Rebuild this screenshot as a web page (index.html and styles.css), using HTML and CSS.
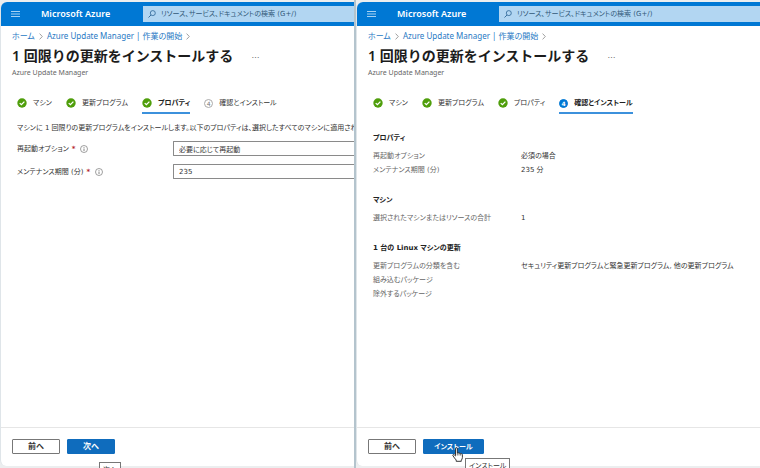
FILE: index.html
```html
<!DOCTYPE html>
<html lang="ja">
<head>
<meta charset="utf-8">
<title>1 回限りの更新をインストールする - Microsoft Azure</title>
<link rel="stylesheet" href="styles.css">
</head>
<body>
<svg class="sprite" aria-hidden="true">
  <symbol id="check" viewBox="0 0 10 10"><circle cx="5" cy="5" r="4.7" fill="#4f9e0b"/><path d="M2.7 5.1 4.4 6.7 7.4 3.6" fill="none" stroke="#fff" stroke-width="1.3"/></symbol>
  <symbol id="info" viewBox="0 0 8 8"><circle cx="4" cy="4" r="3.5" fill="none" stroke="#777" stroke-width=".7"/><path d="M4 3.5V6M4 2v.8" stroke="#666" stroke-width=".8"/></symbol>
  <symbol id="menu" viewBox="0 0 9 8"><path d="M0 1.5h9M0 4h9M0 6.5h9" stroke="#b9dcf6" stroke-width=".9"/></symbol>
  <symbol id="search" viewBox="0 0 8 8"><circle cx="4.8" cy="3.1" r="2.5" fill="none" stroke="#2c6596" stroke-width=".8"/><path d="M3 5 .5 7.5" stroke="#2c6596" stroke-width=".9"/></symbol>
  <symbol id="chevron" viewBox="0 0 4 7"><path d="M.6.6 3.3 3.5.6 6.4" fill="none" stroke="#888" stroke-width=".8"/></symbol>
</svg>
<div class="windows">
  <section class="window">
    <header class="topbar">
      <button class="menu" aria-label="メニュー"><svg><use href="#menu"/></svg></button>
      <span class="brand">Microsoft Azure</span>
      <label class="search"><svg><use href="#search"/></svg><input type="search" aria-label="検索" placeholder="リソース、サービス、ドキュメントの検索 (G+/)"></label>
    </header>
    <nav class="crumbs"><a href="#">ホーム</a><svg><use href="#chevron"/></svg><a href="#">Azure Update Manager | 作業の開始</a><svg><use href="#chevron"/></svg></nav>
    <div class="title"><h1>1 回限りの更新をインストールする</h1><button class="more" aria-label="その他">…</button></div>
    <p class="subtitle">Azure Update Manager</p>
    <nav class="tabs">
      <a href="#"><svg><use href="#check"/></svg>マシン</a>
      <a href="#"><svg><use href="#check"/></svg>更新プログラム</a>
      <a href="#" class="active"><svg><use href="#check"/></svg>プロパティ</a>
      <a href="#"><span class="step">4</span>確認とインストール</a>
    </nav>
    <form class="content form">
      <p class="lead">マシンに 1 回限りの更新プログラムをインストールします。以下のプロパティは、選択したすべてのマシンに適用され</p>
      <div class="field"><label for="reboot">再起動オプション <b>*</b><svg><use href="#info"/></svg></label><input id="reboot" type="text" value="必要に応じて再起動"></div>
      <div class="field"><label for="minutes">メンテナンス期間 (分) <b>*</b><svg><use href="#info"/></svg></label><input id="minutes" type="text" value="235"></div>
    </form>
    <footer class="actions">
      <button class="btn">前へ</button>
      <div class="hinted"><button class="btn primary">次へ</button><span class="tip low">次へ</span></div>
    </footer>
  </section>
  <section class="window">
    <header class="topbar">
      <button class="menu" aria-label="メニュー"><svg><use href="#menu"/></svg></button>
      <span class="brand">Microsoft Azure</span>
      <label class="search"><svg><use href="#search"/></svg><input type="search" aria-label="検索" placeholder="リソース、サービス、ドキュメントの検索 (G+/)"></label>
    </header>
    <nav class="crumbs"><a href="#">ホーム</a><svg><use href="#chevron"/></svg><a href="#">Azure Update Manager | 作業の開始</a><svg><use href="#chevron"/></svg></nav>
    <div class="title"><h1>1 回限りの更新をインストールする</h1><button class="more" aria-label="その他">…</button></div>
    <p class="subtitle">Azure Update Manager</p>
    <nav class="tabs">
      <a href="#"><svg><use href="#check"/></svg>マシン</a>
      <a href="#"><svg><use href="#check"/></svg>更新プログラム</a>
      <a href="#"><svg><use href="#check"/></svg>プロパティ</a>
      <a href="#" class="active"><span class="step current">4</span>確認とインストール</a>
    </nav>
    <div class="content review">
      <h2>プロパティ</h2>
      <dl><dt>再起動オプション</dt><dd>必須の場合</dd><dt>メンテナンス期間 (分)</dt><dd>235 分</dd></dl>
      <h2>マシン</h2>
      <dl><dt>選択されたマシンまたはリソースの合計</dt><dd>1</dd></dl>
      <h2>1 台の Linux マシンの更新</h2>
      <dl><dt>更新プログラムの分類を含む</dt><dd>セキュリティ更新プログラムと緊急更新プログラム, 他の更新プログラム</dd><dt>組み込むパッケージ</dt><dd></dd><dt>除外するパッケージ</dt><dd></dd></dl>
    </div>
    <footer class="actions">
      <button class="btn">前へ</button>
      <div class="hinted"><button class="btn primary wide">インストール</button><span class="tip">インストール</span>
        <svg class="pointer" viewBox="0 0 12 15"><path d="M3.5 8.5V1.8Q3.5.7 4.4.7T5.3 1.8V6Q6.2 5.2 7 6.3 8 5.7 8.7 6.8 9.8 6.2 10.4 7.5V10.5Q10.2 12.3 9.3 13.2V14.3H4.2V13Q2.5 11.2 1 8.8.4 7.7 1.3 7.5 2 7.3 3.5 9Z" fill="#fff" stroke="#222" stroke-width=".9"/><path d="M5.3 6v2.5M7 6.3v2.2M8.7 6.8v1.8" stroke="#222" stroke-width=".6"/></svg>
      </div>
    </footer>
  </section>
</div>
</body>
</html>
```
FILE: styles.css
```css
* { box-sizing: border-box; }

body {
  margin: 0;
  background: #eceeef;
  color: #333;
  font: 7px/14px "DejaVu Sans", "Noto Sans CJK JP", sans-serif;
  font-feature-settings: "palt";
}

h1, h2, p, dl, dd { margin: 0; }
a { color: inherit; text-decoration: none; }
button, input { font: inherit; font-feature-settings: inherit; color: inherit; }
svg { flex: none; }
.sprite { position: absolute; width: 0; height: 0; }

.windows {
  display: grid;
  grid-template-columns: 354fr 404fr;
  gap: 2px;
  height: 100vh;
  overflow: hidden;
  padding: 2px 0;
  background: linear-gradient(#b4c4cd, #b4c4cd) 46.7% 0 / 2px 100% no-repeat;
}

.window {
  display: flex;
  flex-direction: column;
  min-width: 0;
  background: #fff;
  border-left: 1px solid #dfe5e9;
  border-radius: 6px 0 0 6px;
  white-space: nowrap;
}

.topbar {
  display: flex;
  align-items: center;
  height: 24px;
  padding-left: 10px;
  background: #0078d4;
  border-radius: 6px 0 0 0;
}
.menu { display: flex; padding: 0; border: 0; background: none; }
.menu svg { width: 9px; height: 8px; }
.brand { width: 102px; margin-left: 21px; color: #fff; font-family: "Noto Sans", sans-serif; font-size: 9px; font-weight: 600; }
.search {
  display: flex;
  flex: 1;
  align-items: center;
  gap: 5px;
  min-width: 0;
  height: 16px;
  padding-left: 5px;
  background: #b2d6f2;
}
.search svg { width: 8px; height: 8px; }
.search input { flex: 1; min-width: 0; padding: 0; border: 0; background: none; }
.search input::placeholder { color: #315878; opacity: 1; }

.crumbs {
  display: flex;
  align-items: center;
  gap: 4px;
  margin: 3px 0 0 11px;
  color: #2779c4;
  font-family: "Noto Sans", "Noto Sans CJK JP", sans-serif;
  font-size: 8px;
}
.crumbs svg { width: 4px; height: 7px; }

.title { display: flex; align-items: center; gap: 18px; margin-left: 11px; height: 25px; }
.title h1 {
  color: #1c1c1c;
  font-family: "Noto Sans", "Noto Sans CJK JP", sans-serif;
  font-size: 14px;
  font-weight: 600;
  line-height: 25px;
  font-feature-settings: normal;
}
.more { padding: 0; border: 0; background: none; color: #666; font-size: 8px; }
.subtitle { margin-left: 11px; color: #666; font-family: "Noto Sans", sans-serif; line-height: 10px; }

.tabs { display: flex; gap: 14px; margin: 16px 0 0 16px; }
.tabs a { display: flex; align-items: center; gap: 6px; height: 20px; border-bottom: 2px solid transparent; }
.tabs .active { border-color: #3c91dc; color: #222; font-weight: 600; }
.tabs svg { width: 10px; height: 10px; }
.step {
  width: 9px;
  height: 9px;
  border: 1px solid #aaa;
  border-radius: 50%;
  color: #777;
  font-size: 6px;
  line-height: 7px;
  text-align: center;
}
.current { border-color: #0078d4; background: #0078d4; color: #fff; }

.content { flex: 1; min-height: 0; padding-left: 16px; }
.form { padding-top: 7px; }
.lead { overflow: hidden; margin-bottom: 6px; }
.field { display: flex; align-items: center; margin-bottom: 8px; }
.field label { display: flex; align-items: center; gap: 3px; width: 156px; }
.field b { color: #b3262b; }
.field svg { width: 8px; height: 8px; margin-left: 2px; }
.field input {
  flex: 1;
  min-width: 0;
  height: 15px;
  padding: 0 5px;
  border: 1px solid #8a8a8a;
  border-right: 0;
  border-radius: 1px 0 0 1px;
  background: #fff;
}

.review { padding-top: 17px; }
.review h2 { margin-bottom: 4px; color: #222; font-size: 7px; font-weight: 600; line-height: 14px; }
.review dl { display: grid; grid-template-columns: 148px 1fr; grid-auto-rows: 14px; margin-bottom: 16px; }
.review dt { color: #666; }

.actions {
  display: flex;
  gap: 7px;
  height: 39px;
  padding: 11px 0 0 11px;
  border-top: 1px solid #e6e6e6;
}
.btn {
  width: 48px;
  height: 15px;
  padding: 0;
  border: 1px solid #777;
  border-radius: 1px;
  background: #fff;
  font-size: 8px;
  font-weight: 600;
  line-height: 12px;
}
.primary { border-color: #0f6cbd; background: #0f6cbd; color: #fff; }
.wide { width: 61px; font-size: 7px; }
.hinted { position: relative; height: 15px; }
.tip {
  position: absolute;
  left: 42px;
  top: 19px;
  padding: 0 3px;
  border: 1px solid #777;
  background: #fff;
}
.low { left: 32px; top: 23px; }
.pointer { position: absolute; left: 29px; top: 8px; width: 12px; height: 15px; }
```
